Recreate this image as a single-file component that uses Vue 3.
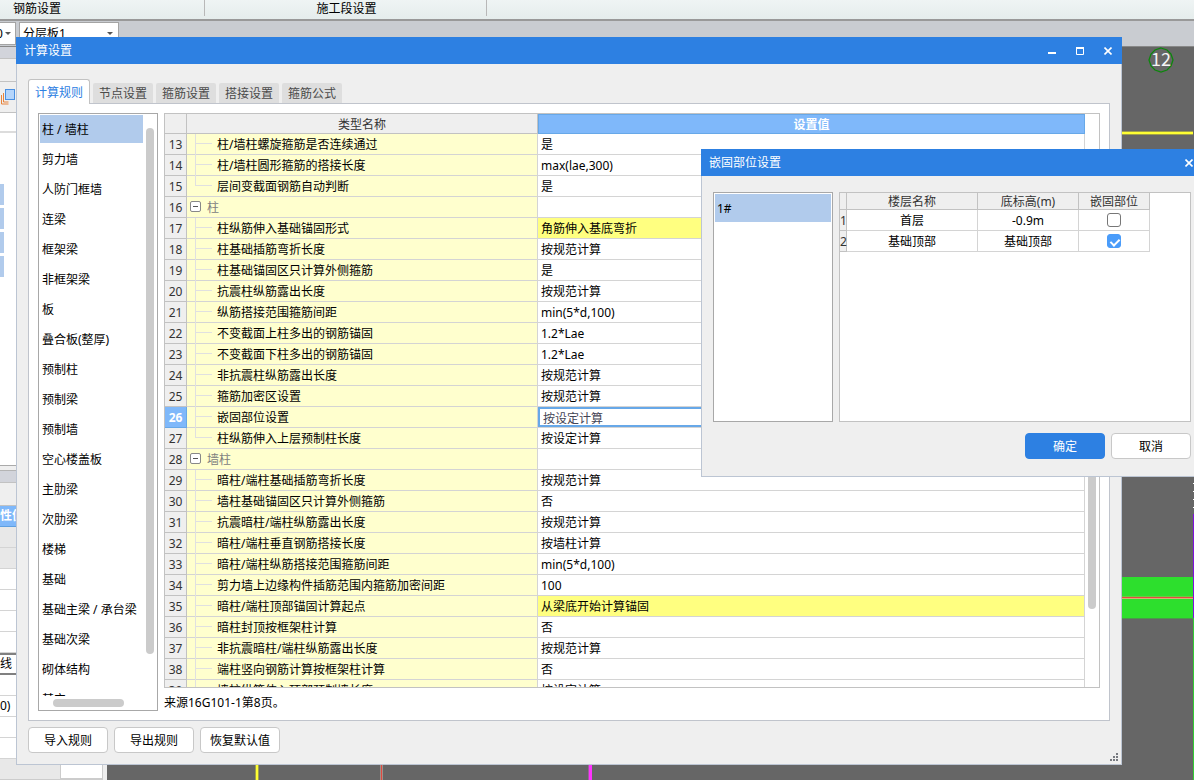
<script setup>
import { ref } from 'vue'

const tabs = ['计算规则', '节点设置', '箍筋设置', '搭接设置', '箍筋公式']
const activeTab = ref(0)

const categories = [
  '柱 / 墙柱', '剪力墙', '人防门框墙', '连梁', '框架梁', '非框架梁', '板', '叠合板(整厚)',
  '预制柱', '预制梁', '预制墙', '空心楼盖板', '主肋梁', '次肋梁', '楼梯', '基础',
  '基础主梁 / 承台梁', '基础次梁', '砌体结构', '其它',
]
const activeCategory = ref(0)

const rows = ref([
  { no: 13, name: '柱/墙柱螺旋箍筋是否连续通过', value: '是' },
  { no: 14, name: '柱/墙柱圆形箍筋的搭接长度', value: 'max(lae,300)' },
  { no: 15, name: '层间变截面钢筋自动判断', value: '是', last: true },
  { no: 16, name: '柱', value: '', group: true },
  { no: 17, name: '柱纵筋伸入基础锚固形式', value: '角筋伸入基底弯折', changed: true },
  { no: 18, name: '柱基础插筋弯折长度', value: '按规范计算' },
  { no: 19, name: '柱基础锚固区只计算外侧箍筋', value: '是' },
  { no: 20, name: '抗震柱纵筋露出长度', value: '按规范计算' },
  { no: 21, name: '纵筋搭接范围箍筋间距', value: 'min(5*d,100)' },
  { no: 22, name: '不变截面上柱多出的钢筋锚固', value: '1.2*Lae' },
  { no: 23, name: '不变截面下柱多出的钢筋锚固', value: '1.2*Lae' },
  { no: 24, name: '非抗震柱纵筋露出长度', value: '按规范计算' },
  { no: 25, name: '箍筋加密区设置', value: '按规范计算' },
  { no: 26, name: '嵌固部位设置', value: '按设定计算', editing: true },
  { no: 27, name: '柱纵筋伸入上层预制柱长度', value: '按设定计算', last: true },
  { no: 28, name: '墙柱', value: '', group: true },
  { no: 29, name: '暗柱/端柱基础插筋弯折长度', value: '按规范计算' },
  { no: 30, name: '墙柱基础锚固区只计算外侧箍筋', value: '否' },
  { no: 31, name: '抗震暗柱/端柱纵筋露出长度', value: '按规范计算' },
  { no: 32, name: '暗柱/端柱垂直钢筋搭接长度', value: '按墙柱计算' },
  { no: 33, name: '暗柱/端柱纵筋搭接范围箍筋间距', value: 'min(5*d,100)' },
  { no: 34, name: '剪力墙上边缘构件插筋范围内箍筋加密间距', value: '100' },
  { no: 35, name: '暗柱/端柱顶部锚固计算起点', value: '从梁底开始计算锚固', changed: true },
  { no: 36, name: '暗柱封顶按框架柱计算', value: '否' },
  { no: 37, name: '非抗震暗柱/端柱纵筋露出长度', value: '按规范计算' },
  { no: 38, name: '端柱竖向钢筋计算按框架柱计算', value: '否' },
  { no: 39, name: '墙柱纵筋伸入顶部预制墙长度', value: '按设定计算' },
])

const floors = ref([
  { name: '首层', elevation: '-0.9m', fixed: false },
  { name: '基础顶部', elevation: '基础顶部', fixed: true },
])
</script>

<template>
  <div class="desktop">
    <header class="ribbon">
      <span class="ribbon-group first">钢筋设置</span>
      <span class="ribbon-group second">施工段设置</span>
    </header>
    <div class="toolbar">
      <label class="combo narrow"><select aria-label="编号"><option>0</option></select><i></i></label>
      <label class="combo wide"><select aria-label="分层"><option>分层板1</option></select><i></i></label>
    </div>
    <div class="workspace">
      <aside class="dock">
        <div class="dock-title"></div>
        <div class="dock-bar"></div>
        <div class="dock-tools">
          <svg width="16" height="18" viewBox="0 0 16 18">
            <path d="M1.5 7v9h7M3.500 5v9h5" fill="none" stroke="#e8833a" />
            <rect x="5.500" y="1.500" width="9" height="10" fill="#b5d5fb" stroke="#4a90e2" />
          </svg>
        </div>
        <div class="dock-search"></div>
        <div class="dock-list"><b></b><b></b><b></b><b></b></div>
        <div class="dock-gap"></div>
        <div class="dock-title"></div>
        <div class="dock-bar"></div>
        <div class="prop-head">性值</div>
        <div class="prop gray"></div>
        <div class="prop gray"></div>
        <div class="prop"></div>
        <div class="prop"></div>
        <div class="prop"></div>
        <div class="prop"></div>
        <div class="prop current">线</div>
        <div class="prop"></div>
        <div class="prop">0)</div>
        <div class="prop"></div>
        <div class="prop"></div>
        <div class="dock-foot"><span></span></div>
      </aside>
      <main class="canvas">
        <div class="beam yellow-h"></div>
        <div class="slab"></div>
        <div class="beam yellow-v"></div>
        <div class="beam red-v"></div>
        <div class="beam magenta-v"></div>
        <div class="edge"></div>
        <div class="edge-ticks"></div>
        <div class="edge-wall"></div>
        <div class="edge-green"></div>
        <svg class="axis" width="26" height="26" viewBox="0 0 26 26">
          <polygon points="13,1 19,3 23,7 25,13 23,19 19,23 13,25 7,23 3,19 1,13 3,7 7,3" fill="none" stroke="#0c860c" stroke-width="1.3" />
          <text x="13" y="19" text-anchor="middle" fill="#f4f4f4">12</text>
        </svg>
      </main>
    </div>

    <section class="dialog main-dialog" aria-label="计算设置">
      <div class="title">
        <h1>计算设置</h1>
        <button class="win" aria-label="最小化"><svg width="8" height="8"><path d="M0 6h8" stroke="#fff" stroke-width="2" /></svg></button>
        <button class="win" aria-label="最大化"><svg width="8" height="8"><path d="M.5 1v6.500h7V1" fill="none" stroke="#fff" /><path d="M0 1h8" stroke="#fff" stroke-width="2" /></svg></button>
        <button class="win" aria-label="关闭"><svg width="8" height="8"><path d="M.5.5l7 7M7.500.5l-7 7" stroke="#fff" stroke-width="1.6" /></svg></button>
      </div>
      <div class="dialog-body">
        <nav class="tabs" role="tablist">
          <button v-for="(t, i) in tabs" :key="t" role="tab" class="tab" :class="{ active: i === activeTab }" :aria-selected="i === activeTab" @click="activeTab = i">{{ t }}</button>
        </nav>
        <div class="page">
          <div class="list categories">
            <div class="list-view">
              <button v-for="(c, i) in categories" :key="c" class="item" :class="{ selected: i === activeCategory }" @click="activeCategory = i">{{ c }}</button>
            </div>
            <span class="thumb-v"></span>
            <span class="thumb-h"></span>
          </div>
          <div class="sheet">
            <div class="sheet-frame">
              <div class="sheet-view">
                <table class="rules">
                  <colgroup><col class="c-no"><col class="c-name"><col></colgroup>
                  <thead><tr><th></th><th>类型名称</th><th class="sorted">设置值</th></tr></thead>
                  <tbody>
                    <tr v-for="r in rows" :key="r.no" :class="{ group: r.group, changed: r.changed, editing: r.editing, last: r.last }">
                      <th scope="row">{{ r.no }}</th>
                      <td class="name">
                        <div class="cell">
                          <button v-if="r.group" class="fold" aria-label="折叠"></button>
                          <span v-else class="branch"></span>
                          <span>{{ r.name }}</span>
                        </div>
                      </td>
                      <td class="value">
                        <input v-if="r.editing" v-model="r.value" :aria-label="r.name">
                        <template v-else>{{ r.value }}</template>
                      </td>
                    </tr>
                  </tbody>
                </table>
              </div>
              <div class="sheet-scroll"><span></span></div>
            </div>
            <p class="note">来源16G101-1第8页。</p>
          </div>
        </div>
        <footer class="actions">
          <button class="btn">导入规则</button>
          <button class="btn">导出规则</button>
          <button class="btn">恢复默认值</button>
          <svg class="grip" width="8" height="8" fill="#777a80">
            <path d="M6 0h2v2h-2zM3 3h2v2h-2zM6 3h2v2h-2zM0 6h2v2h-2zM3 6h2v2h-2zM6 6h2v2h-2z" />
          </svg>
        </footer>
      </div>
    </section>

    <section class="dialog fix-dialog" aria-label="嵌固部位设置">
      <div class="title">
        <h1>嵌固部位设置</h1>
        <button class="win" aria-label="关闭"><svg width="8" height="8"><path d="M.5.5l7 7M7.500.5l-7 7" stroke="#fff" stroke-width="1.6" /></svg></button>
      </div>
      <div class="fix-body">
        <div class="fix-panes">
          <div class="list towers"><button class="item selected">1#</button></div>
          <div class="floor-frame">
            <table class="floors">
              <colgroup><col class="f-no"><col class="f-name"><col class="f-elev"><col class="f-fix"></colgroup>
              <thead><tr><th></th><th>楼层名称</th><th>底标高(m)</th><th>嵌固部位</th></tr></thead>
              <tbody>
                <tr v-for="(f, i) in floors" :key="f.name">
                  <th scope="row">{{ i + 1 }}</th>
                  <td>{{ f.name }}</td>
                  <td>{{ f.elevation }}</td>
                  <td class="check"><input v-model="f.fixed" type="checkbox" :aria-label="f.name"></td>
                </tr>
              </tbody>
            </table>
          </div>
        </div>
        <div class="fix-actions">
          <button class="btn primary">确定</button>
          <button class="btn">取消</button>
        </div>
      </div>
    </section>
  </div>
</template>

<style>
body { margin: 0; overflow: hidden; }
</style>

<style scoped>
.desktop, .desktop * { box-sizing: border-box; }
.desktop {
  position: relative; display: flex; flex-direction: column; height: 100vh; overflow: hidden;
  background: #c9ccd1; color: #000;
  font: 12px/20px "Noto Sans", "Noto Sans CJK SC", sans-serif;
}
button, input, select { font: inherit; color: inherit; margin: 0; padding: 0; border: 0; background: none; border-radius: 0; }
h1, p { margin: 0; font: inherit; }

.ribbon { display: flex; height: 21px; flex: none; border-bottom: 2px solid #999; background: linear-gradient(#eff4f4, #e5edec); line-height: 17px; }
.ribbon-group { height: 16px; border-right: 1px solid #b8b8b8; text-align: center; }
.first { width: 205px; padding-right: 130px; }
.second { width: 282px; padding-left: 2px; }
.toolbar { display: flex; gap: 3px; height: 25px; flex: none; padding-top: 1px; }
.combo { position: relative; display: block; height: 23px; border: 1px solid #a4a4a4; background: #fff; }
.combo select { appearance: none; width: 100%; height: 21px; padding-left: 3px; outline: 0; }
.narrow { width: 16px; border-left: 0; }
.narrow .narrow, .combo.narrow select { padding: 0; text-indent: -4px; }
.wide { width: 100px; }
.combo i { position: absolute; right: 5px; top: 9px; border: 3px solid transparent; border-top-color: #555; border-bottom: 0; }
.combo.narrow i { right: 4px; }

.workspace { display: flex; flex: 1; min-height: 0; border-top: 1px solid #888; }
.dock { display: flex; flex-direction: column; width: 107px; flex: none; background: #fff; border-right: 4px solid #eee; }
.dock > * { flex: none; }
.dock-title { height: 12px; background: #d2d4db; border-bottom: 1px solid #c2c2c2; }
.dock-bar { height: 23px; background: #efefef; border-bottom: 1px solid #c2c2c2; }
.dock-tools { height: 31px; padding-top: 6px; background: #efefef; border-bottom: 1px solid #c2c2c2; }
.dock-search { height: 20px; border-bottom: 2px solid #dcdcdc; }
.dock .dock-list { flex: 1; display: flex; flex-direction: column; gap: 3px; padding-top: 51px; border-bottom: 1px solid #aaa; }
.dock-list b { width: 4px; height: 21px; background: #b1cbec; }
.dock-gap { height: 5px; background: #efefef; border-bottom: 1px solid #b4b4b4; }
.prop-head { height: 21px; background: #7fb8fa; border-bottom: 1px solid #5e9fe0; color: #fff; font-weight: bold; }
.prop { height: 21px; border-bottom: 1px solid #d4d4d4; }
.gray { background: #e8e8e8; }
.current { height: 22px; border-top: 2px solid #808080; border-bottom: 2px solid #808080; line-height: 18px; }
.dock-foot { display: flex; justify-content: flex-end; height: 21px; background: #e8e8e8; border-bottom: 1px solid #ccc; }
.dock-foot span { width: 43px; background: #fff; border: 1px solid #ccc; }

.canvas { position: relative; flex: 1; overflow: hidden; background: #666; }
.canvas > * { position: absolute; }
.beam { background: #ff3; }
.yellow-h { left: 0; right: 1px; top: 84px; height: 4px; border: solid #a0a04c; border-width: 1px 0; }
.yellow-v { left: 148px; top: 0; bottom: 0; width: 4px; border: solid #a0a04c; border-width: 0 1px; }
.red-v { left: 273px; top: 0; bottom: 0; width: 3px; background: #e04840; border: solid #a09088; border-width: 0 1px; }
.magenta-v { left: 481px; top: 0; bottom: 0; width: 4px; background: #f3f; border-left: 1px solid #a05ca0; }
.slab { left: 0; right: 1px; top: 530px; height: 42px; background: linear-gradient(#2ddf2d 19px, #6acb45 19px 20px, #e84c3c 20px 21px, #d5b078 21px 22px, #2ddf2d 22px 41px, #4a9a4a 41px); }
.edge { right: 0; top: 0; bottom: 0; width: 1px; background: #666; }
.edge-ticks { right: 0; top: 436px; height: 28px; width: 1px; background: repeating-linear-gradient(#fff 0 1px, #666 1px 8px); }
.edge-wall { right: 0; top: 467px; height: 104px; width: 1px; background: #8010e0; }
.edge-green { right: 0; top: 571px; bottom: 0; width: 1px; background: #3c3; }
.axis { right: 20px; top: 0; font: 18px "Noto Sans CJK SC", sans-serif; }

.dialog { position: absolute; display: flex; flex-direction: column; background: #efefef; }
.main-dialog { left: 16px; right: 72px; top: 37px; bottom: 15px; }
.title { display: flex; align-items: center; gap: 20px; height: 27px; flex: none; padding: 0 10px 0 8px; background: #2d80e2; color: #fff; }
.title h1 { flex: 1; }
.win { display: block; width: 8px; height: 8px; }
.win svg { display: block; }
.dialog-body { display: flex; flex-direction: column; flex: 1; min-height: 0; padding: 15px 11px 11px; border: 1px solid #bcc5d3; border-top: 0; }
.tabs { display: flex; align-items: flex-end; gap: 3px; height: 25px; flex: none; margin-bottom: -1px; z-index: 1; }
.tab { width: 60px; height: 20px; margin-bottom: 1px; padding-top: 2px; background: #dedede; color: #4a4a4a; border-radius: 2px 2px 0 0; line-height: 18px; }
.tab.active { width: 62px; height: 25px; margin: 0; background: #fff; color: #2d80e2; border: 1px solid #c2c2c2; border-bottom: 0; border-radius: 3px 3px 0 0; }
.page { display: flex; gap: 6px; flex: 1; min-height: 0; padding: 9px; background: #fff; border: 1px solid #c0c4cc; }
.list { background: #fff; border: 1px solid #a8a8a8; }
.categories { position: relative; width: 120px; flex: none; padding: 1px 14px 14px 1px; }
.list-view { height: 100%; overflow: hidden; }
.item { display: block; width: 100%; height: 28px; margin-bottom: 2px; padding: 2px 0 0 2px; text-align: left; white-space: nowrap; }
.item.selected { background: #b1cbec; }
.thumb-v { position: absolute; right: 3px; top: 14px; bottom: 56px; width: 8px; border-radius: 4px; background: #cbcbcb; }
.thumb-h { position: absolute; left: 14px; bottom: 3px; width: 71px; height: 8px; border-radius: 4px; background: #cbcbcb; }

.sheet { display: flex; flex-direction: column; flex: 1; min-width: 0; }
.sheet-frame { display: flex; flex: 1; min-height: 0; border: 1px solid #c2c2c2; }
.sheet-view { flex: 1; overflow: hidden; }
.sheet-scroll { display: flex; width: 14px; padding: 80px 3px 78px; }
.sheet-scroll span { flex: 1; border-radius: 4px; background: #cbcbcb; }
.note { height: 23px; padding-top: 5px; }
table { border-collapse: separate; border-spacing: 0; table-layout: fixed; }
th { padding: 2px 0 0; font-weight: normal; color: #333; background: #efefef; border: solid #c2c2c2; border-width: 0 1px 1px 0; }
td { padding: 2px 0 0; border: solid #d4d4d4; border-width: 0 1px 1px 0; }
.rules { width: 100%; }
.rules thead th { height: 20px; line-height: 17px; }
.rules .sorted { padding-top: 1px; background: #7fb8fa; color: #fff; font-weight: bold; border: 1px solid #67a8e8; }
.c-no { width: 22px; }
.c-name { width: 351px; }
.rules tbody th, .rules td { height: 21px; line-height: 18px; }
.rules .name { padding: 0; background: #ffffce; }
.cell { display: flex; height: 20px; line-height: 22px; }
.branch {
  width: 25px; height: 21px; margin-right: 5px;
  background:
    linear-gradient(#e0e0e0, #e0e0e0) 8px 0 / 1px 21px no-repeat,
    linear-gradient(#e0e0e0, #e0e0e0) 8px 9px / 17px 1px no-repeat;
}
.last .branch { background-size: 1px 10px, 17px 1px; }
.fold { width: 11px; height: 11px; margin: 4px 6px 0 3px; background: linear-gradient(#555, #555) center / 5px 1px no-repeat #fff; border: 1px solid #888; border-radius: 2px; }
.group .name { color: #808080; }
.rules .value { padding-left: 3px; }
.changed .value { background: #ffff80; }
.editing th { background: #7fb8fa; color: #fff; font-weight: bold; border-color: #67a8e8; }
.rules .editing .value { padding: 0; }
.value input { display: block; width: 100%; height: 20px; padding: 1px 3px 0; border: 2px solid #67a8e8; outline: 0; color: #445; background: #fff; }

.btn { width: 80px; height: 26px; padding-top: 2px; background: #fff; border: 1px solid #c8c8c8; border-radius: 4px; }
.primary { background: #2d80e2; border-color: #2d80e2; color: #fff; }
.actions { position: relative; display: flex; gap: 6px; padding-top: 6px; flex: none; }
.grip { position: absolute; right: -8px; bottom: -8px; }

.fix-dialog { left: 701px; right: -9px; top: 149px; }
.fix-body { padding: 16px 11px 17px; border: 1px solid #bcc5d3; border-top: 0; }
.fix-panes { display: flex; gap: 6px; height: 230px; }
.towers { width: 120px; padding: 1px; }
.floor-frame { flex: 1; background: #fff; border: 1px solid #c2c2c2; }
.floors { width: 310px; text-align: center; }
.f-no { width: 7px; }
.f-name { width: 131px; }
.f-elev { width: 101px; }
.f-fix { width: 71px; }
.floors thead th { height: 17px; line-height: 14px; }
.floors tbody th, .floors td { height: 21px; line-height: 18px; }
.floors .check { padding: 0; }
.floors input { appearance: none; position: relative; display: block; width: 14px; height: 14px; margin: 0 auto; background: #fff; border: 1px solid #777; border-radius: 3px; }
.floors input:checked { background: #4a9cfa; border-color: #4a9cfa; }
.floors input:checked::after { content: ""; position: absolute; left: 4px; top: 2px; width: 4px; height: 7px; border: solid #fff; border-width: 0 2px 2px 0; transform: rotate(45deg); }
.fix-actions { display: flex; justify-content: flex-end; gap: 6px; margin-top: 11px; }
</style>
